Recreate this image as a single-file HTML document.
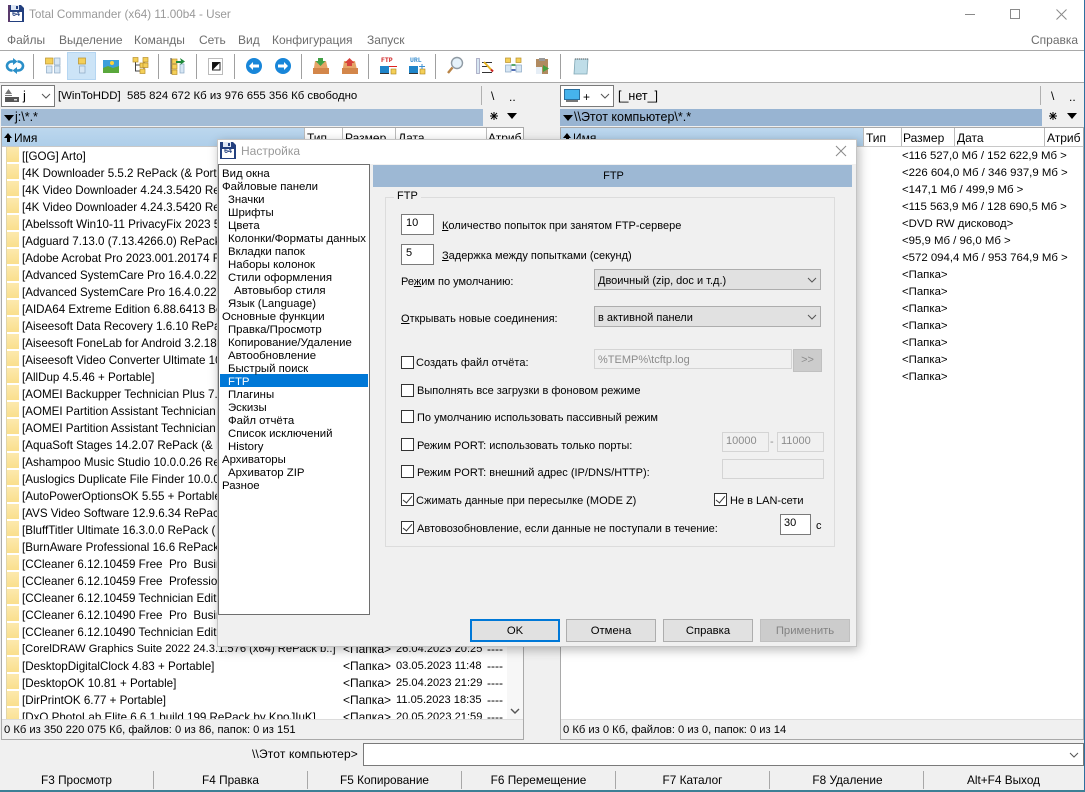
<!DOCTYPE html>
<html lang="ru"><head><meta charset="utf-8"><title>Total Commander</title>
<style>
html,body{margin:0;padding:0}
body{width:1085px;height:792px;position:relative;overflow:hidden;background:#f0f0f0;font:12px/16px "Liberation Sans",sans-serif;color:#000}
.a{position:absolute;white-space:nowrap}
.b{position:absolute;box-sizing:border-box}
.g{color:#6d6d6d}
svg{position:absolute;overflow:visible}
.sep{position:absolute;top:54px;width:1px;height:25px;background:#a0a0a0}
.hd{position:absolute;top:128px;height:18px;background:linear-gradient(#bcd7ee,#aecee9)}
.hc{position:absolute;top:130px;line-height:16px;white-space:nowrap}
.dv{position:absolute;top:128px;width:1px;height:18px;background:#bbb}
.list{position:absolute;top:148px;left:22px;line-height:17px;white-space:nowrap}
.list div{height:17px}
.fold{position:absolute;left:6px;top:147px;width:13px;height:572px;background:repeating-linear-gradient(#fce9ad 0,#fadf8d 15px,#fff 15px,#fff 17px);border-left:1px solid #e2d6a8;box-sizing:border-box}
.tree{position:absolute;top:168px;left:0;font-size:11.4px;line-height:13px;white-space:nowrap}
.tree div{height:13px}
.l0{padding-left:222px}.l1{padding-left:228px}.l2{padding-left:234px}
.edit{position:absolute;box-sizing:border-box;background:#fff;border:1px solid #7a7a7a;padding:0 0 0 4px;line-height:16px}
.dis{position:absolute;box-sizing:border-box;background:#f0f0f0;border:1px solid #d4d4d4;color:#8c8c8c;padding:2px 0 0 3px;line-height:16px}
.sel{position:absolute;box-sizing:border-box;background:#e1e1e1;border:1px solid #adadad;left:594px;width:227px;height:21px;padding:3px 0 0 3px;line-height:16px}
.ck{position:absolute;box-sizing:border-box;width:13px;height:13px;left:401px;background:#fff;border:1px solid #333}
.ck.on::after{content:"";position:absolute;left:3px;top:0;width:4px;height:8px;border:solid #333;border-width:0 1px 1px 0;transform:rotate(40deg)}
.btn{position:absolute;box-sizing:border-box;top:619px;width:90px;height:23px;background:#e1e1e1;border:1px solid #adadad;text-align:center;line-height:23px;font-size:11.3px}
.fk{position:absolute;top:772px;text-align:center;line-height:16px;width:153px;font-size:11.8px}
.fs{position:absolute;top:771px;width:1px;height:18px;background:#a8a8a8}
.dlg{font-size:11px}
u{text-decoration:underline}
</style></head><body>

<!-- window chrome -->
<div class="b" style="left:0;top:0;width:1085px;height:51px;background:#fff"></div>
<svg style="left:8px;top:5px" width="16" height="17" viewBox="0 0 16 17"><path d="M0 0h13l3 3v14H0z" fill="#23407f"/><rect x="3" y="0" width="8" height="5" fill="#dfe8f5"/><rect x="8" y="1" width="2" height="3" fill="#23407f"/><rect x="2" y="7" width="12" height="9" fill="#fff"/><path d="M0 0h2v17H0z" fill="#c0304a" opacity=".35"/></svg>
<div class="a" style="left:9px;top:9px;font:bold 7px/12px 'Liberation Sans',sans-serif;color:#23407f;width:14px;text-align:center">64</div>
<div class="a" style="left:29px;top:7px;color:#999;font-size:11.7px">Total Commander (x64) 11.00b4 - User</div>
<svg style="left:960px;top:8px" width="110" height="14"><path d="M5 6.500h10" stroke="#8a8a8a"/><rect x="50.500" y="1.500" width="9" height="9" fill="none" stroke="#8a8a8a"/><path d="M96.500 1.500l10 10M106.500 1.500l-10 10" stroke="#8a8a8a" fill="none"/></svg>
<div class="a g" style="left:7px;top:32px">Файлы</div>
<div class="a g" style="left:59px;top:32px">Выделение</div>
<div class="a g" style="left:134px;top:32px">Команды</div>
<div class="a g" style="left:199px;top:32px">Сеть</div>
<div class="a g" style="left:238px;top:32px">Вид</div>
<div class="a g" style="left:272px;top:32px">Конфигурация</div>
<div class="a g" style="left:367px;top:32px">Запуск</div>
<div class="a g" style="left:1031px;top:32px">Справка</div>
<div class="b" style="left:0;top:50px;width:1084px;height:1px;background:#a9a9a9"></div>

<!-- toolbar -->
<div class="b" style="left:0;top:51px;width:1084px;height:31px;background:#fff"></div>
<div class="b" style="left:0;top:82px;width:1084px;height:1px;background:#a9a9a9"></div>
<div class="b" style="left:67px;top:52px;width:29px;height:28px;background:#cce4f7;border:1px solid #b5d6f2"></div>
<div class="sep" style="left:33px"></div><div class="sep" style="left:158px"></div><div class="sep" style="left:196px"></div><div class="sep" style="left:234px"></div><div class="sep" style="left:301px"></div><div class="sep" style="left:368px"></div><div class="sep" style="left:435px"></div><div class="sep" style="left:560px"></div>

<svg style="left:0;top:0" width="620" height="84" viewBox="0 0 620 84">
<defs>
<g id="fd"><rect width="7" height="6" fill="#f4cf58" stroke="#b8902a" stroke-width=".7"/></g>
<g id="fs"><rect width="5" height="4.500" fill="#f4cf58" stroke="#b8902a" stroke-width=".7"/></g>
<g id="pg"><rect width="5.500" height="7" fill="#d6e6f4" stroke="#8aa8c4" stroke-width=".7"/></g>
</defs>
<!-- refresh -->
<path d="M13 61.500h-1a5 4.500 0 0 0 0 9h.5M17 70.500h1a5 4.500 0 0 0 0-9h-.5" fill="none" stroke="#2a8fc8" stroke-width="2.600"/><path d="M13 58l4.500 3.500-4.500 3.500zM17 67l-4.500 3.500 4.500 3.500z" fill="#2a8fc8"/>
<!-- two panels -->
<rect x="45.500" y="58" width="7.500" height="6" fill="#f4cf58" stroke="#b8902a" stroke-width=".7"/><rect x="54.500" y="58" width="5.500" height="7" fill="#d6e6f4" stroke="#8aa8c4" stroke-width=".7"/><use href="#pg" x="46.500" y="66"/><use href="#pg" x="54.500" y="66"/>
<!-- one panel -->
<rect x="78.500" y="58" width="7" height="6" fill="#f4cf58" stroke="#b8902a" stroke-width=".7"/><use href="#pg" x="79.500" y="66"/>
<!-- picture -->
<rect x="103" y="60" width="16" height="13" fill="#3b9fdc"/><path d="M103 73v-5l5-2 5 2 6-2v7z" fill="#5aa83c"/><circle cx="112" cy="63" r="2" fill="#ffd23c"/>
<!-- tree -->
<path d="M135.500 60v11h5M135.500 65h5M144 60v10" stroke="#444" fill="none"/><use href="#fs" x="133" y="57.500"/><use href="#fs" x="140" y="63"/><use href="#fs" x="140" y="69"/><use href="#fs" x="143" y="57.500"/><use href="#fs" x="143" y="63"/>
<!-- sync dirs -->
<path d="M171 58v16" stroke="#444"/><use href="#fs" x="172" y="59"/><use href="#fs" x="172" y="64.500"/><use href="#fs" x="172" y="70"/><rect x="180" y="64" width="4" height="9" fill="#d6e6f4" stroke="#8aa8c4" stroke-width=".7"/><path d="M176 61h5l-1-3 5 3.500-5 3.500 1-2h-5z" fill="#1f8a3c"/>
<!-- invert -->
<rect x="208.500" y="58.500" width="14" height="16" fill="#fff" stroke="#777" stroke-dasharray="1 1"/><rect x="212.500" y="62.500" width="7.500" height="7.500" fill="#fff" stroke="#222"/><path d="M212.500 62.500h7.500l-7.500 7.500z" fill="#111"/>
<!-- back / forward -->
<circle cx="254" cy="66" r="8" fill="#1886d9"/><path d="M249 66l4-4v2.500h6v3h-6V70z" fill="#fff"/>
<circle cx="283" cy="66" r="8" fill="#1886d9"/><path d="M288 66l-4-4v2.500h-6v3h6V70z" fill="#fff"/>
<!-- boxes -->
<path d="M315 61h3v3h5v-3h3l3 13h-16z" fill="#e6a567"/><path d="M313 68h16v6h-16z" fill="#d3864a"/><path d="M318 58h5v3h2.500l-5 5-5-5h2.500z" fill="#42a145"/>
<path d="M344 61h3v3h5v-3h3l3 13h-16z" fill="#e6a567"/><path d="M342 68h16v6h-16z" fill="#d3864a"/><path d="M347 66v-3h-2.500l5-5 5 5H352v3z" fill="#d8423c"/>
<!-- FTP/URL -->
<rect x="380" y="66" width="9" height="7" fill="#1e84c9"/><rect x="380" y="73" width="9" height="1" fill="#333"/><rect x="391" y="69" width="5" height="5" fill="#f4cf58" stroke="#a8841f" stroke-width=".6"/><path d="M389 66.500h8" stroke="#d22" stroke-width="1"/>
<rect x="409" y="66" width="9" height="7" fill="#1e84c9"/><rect x="409" y="73" width="9" height="1" fill="#333"/><rect x="420" y="69" width="5" height="5" fill="#f4cf58" stroke="#a8841f" stroke-width=".6"/><path d="M419 66.500h6M422 64v5" stroke="#3d8fd0"/>
<!-- search -->
<circle cx="457" cy="63" r="5.500" fill="#e6f2fa" stroke="#8f9aa3" stroke-width="1.400"/><path d="M452.500 67.500l-4.500 5.500" stroke="#b98446" stroke-width="2.400"/>
<!-- multi rename -->
<rect x="476.500" y="58.500" width="3" height="15" fill="#d7e6f2" stroke="#88a" stroke-width=".6"/><path d="M482 62.500h10M482 66.500h7M482 72.500h10" stroke="#333"/><path d="M484 62l7 7.500" stroke="#e6b422" stroke-width="2"/><path d="M491 69.500l2 2" stroke="#c22" stroke-width="2"/>
<!-- compare -->
<use href="#fs" x="505.500" y="58"/><use href="#fs" x="516" y="58"/><use href="#pg" x="505.500" y="65"/><use href="#pg" x="516" y="65"/><path d="M511.500 65h4" stroke="#1f8a3c" stroke-width="1.500"/><path d="M511.500 70h4" stroke="#1b3f9e" stroke-width="1.500"/>
<!-- clipboard -->
<rect x="536" y="59" width="12" height="15" fill="#b08a60"/><rect x="539" y="58" width="6" height="3" fill="#999"/><rect x="536" y="67" width="6" height="7" fill="#e6eef6"/><path d="M543 65l6 3.500-6 3.500z" fill="#45a03f"/>
<!-- notebook -->
<path d="M575 59h13l-1 15h-13z" fill="#bfdde8" stroke="#7fa5b3" stroke-width=".8"/><path d="M575 59h13" stroke="#555" stroke-dasharray="1 1"/>
</svg>
<div class="a" style="left:381px;top:57px;font:bold 6.500px/8px 'Liberation Mono',monospace;color:#d02020">FTP</div>
<div class="a" style="left:410px;top:57px;font:bold 6.500px/8px 'Liberation Mono',monospace;color:#3a8fd0">URL</div>

<!-- panels -->
<div class="b" style="left:1px;top:127px;width:523px;height:613px;background:#fff;border:1px solid #a9a9a9"></div>
<div class="b" style="left:560px;top:127px;width:524px;height:613px;background:#fff;border:1px solid #a9a9a9"></div>
<div class="b" style="left:507px;top:147px;width:16px;height:572px;background:#f7f7f7"></div>
<svg style="left:510px;top:708px" width="10" height="6"><path d="M1 1l4 4 4-4" fill="none" stroke="#555" stroke-width="1.400"/></svg>

<!-- left drive -->
<div class="b" style="left:1px;top:85px;width:54px;height:22px;background:#fff;border:1px solid #7a7a7a"></div>
<svg style="left:5px;top:88px" width="14" height="15"><path d="M0 6l3.500-5L7 6z" fill="#777"/><rect x="0" y="7" width="7" height="1" fill="#777"/><rect x="0" y="9" width="14" height="5" fill="#555"/><rect x="9" y="11" width="3" height="1.500" fill="#ddd"/></svg>
<div class="a" style="left:23px;top:88px;font-size:13px">j</div>
<svg style="left:41px;top:93px" width="10" height="6"><path d="M1 1l4 4 4-4" fill="none" stroke="#555"/></svg>
<div class="a" style="left:58px;top:88px;font-size:11.4px">[WinToHDD]&nbsp; 585 824 672 Кб из 976 655 356 Кб свободно</div>
<div class="b" style="left:481px;top:86px;width:1px;height:19px;background:#b0b0b0"></div>
<div class="a" style="left:491px;top:88px">\</div><div class="a" style="left:509px;top:89px">..</div>
<div class="b" style="left:1px;top:109px;width:482px;height:17px;background:#a3bcd6"></div>
<svg style="left:4px;top:115px" width="11" height="6"><path d="M0 0h10l-5 6z" fill="#000"/></svg>
<div class="a" style="left:15px;top:109px;font-size:12.5px">j:\*.*</div>
<svg style="left:490px;top:112px" width="8" height="8"><path d="M4 0v8M0 4h8M1 1l6 6M7 1l-6 6" stroke="#000"/></svg>
<svg style="left:507px;top:113px" width="11" height="6"><path d="M0 0h10l-5 6z" fill="#000"/></svg>

<!-- right drive -->
<div class="b" style="left:560px;top:85px;width:54px;height:22px;background:#fff;border:1px solid #7a7a7a"></div>
<svg style="left:564px;top:89px" width="16" height="14"><rect x=".5" y=".5" width="15" height="10" fill="#46b3ec" stroke="#2a6f9e"/><rect x="2" y="11" width="12" height="2" fill="#777"/></svg>
<div class="a" style="left:583px;top:89px">+</div>
<svg style="left:600px;top:93px" width="10" height="6"><path d="M1 1l4 4 4-4" fill="none" stroke="#555"/></svg>
<div class="a" style="left:618px;top:88px;font-size:12.500px">[_нет_]</div>
<div class="b" style="left:1040px;top:86px;width:1px;height:19px;background:#b0b0b0"></div>
<div class="a" style="left:1051px;top:88px">\</div><div class="a" style="left:1069px;top:89px">..</div>
<div class="b" style="left:560px;top:109px;width:482px;height:17px;background:#98b4d2"></div>
<svg style="left:563px;top:115px" width="11" height="6"><path d="M0 0h10l-5 6z" fill="#000"/></svg>
<div class="a" style="left:574px;top:109px;font-size:12.5px">\\Этот компьютер\*.*</div>
<svg style="left:1049px;top:112px" width="8" height="8"><path d="M4 0v8M0 4h8M1 1l6 6M7 1l-6 6" stroke="#000"/></svg>
<svg style="left:1067px;top:113px" width="11" height="6"><path d="M0 0h10l-5 6z" fill="#000"/></svg>

<!-- headers -->
<div class="hd" style="left:2px;width:302px"></div>
<svg style="left:4px;top:133px" width="9" height="9"><path d="M4 0l4 5H6v4H3V5H0z" fill="#000"/></svg>
<div class="hc" style="left:14px">Имя</div><div class="hc" style="left:307px">Тип</div><div class="hc" style="left:345px">Размер</div><div class="hc" style="left:398px">Дата</div><div class="hc" style="left:488px">Атриб</div>
<div class="dv" style="left:304px"></div><div class="dv" style="left:342px"></div><div class="dv" style="left:395px"></div><div class="dv" style="left:486px"></div>
<div class="hd" style="left:561px;width:302px"></div>
<svg style="left:563px;top:133px" width="9" height="9"><path d="M4 0l4 5H6v4H3V5H0z" fill="#000"/></svg>
<div class="hc" style="left:573px">Имя</div><div class="hc" style="left:866px">Тип</div><div class="hc" style="left:903px">Размер</div><div class="hc" style="left:957px">Дата</div><div class="hc" style="left:1047px">Атриб</div>
<div class="dv" style="left:863px"></div><div class="dv" style="left:901px"></div><div class="dv" style="left:954px"></div><div class="dv" style="left:1044px"></div>
<div class="b" style="left:2px;top:146px;width:521px;height:1px;background:#c8c8c8"></div>
<div class="b" style="left:561px;top:146px;width:522px;height:1px;background:#c8c8c8"></div>

<!-- left list -->
<div class="fold"></div>
<div class="list" style="width:485px;height:571px;overflow:hidden;font-size:11.6px">
<div>[[GOG] Arto]</div>
<div>[4K Downloader 5.5.2 RePack (&amp; Portable)</div>
<div>[4K Video Downloader 4.24.3.5420 RePack</div>
<div>[4K Video Downloader 4.24.3.5420 RePack</div>
<div>[Abelssoft Win10-11 PrivacyFix 2023 5.0</div>
<div>[Adguard 7.13.0 (7.13.4266.0) RePack</div>
<div>[Adobe Acrobat Pro 2023.001.20174 RePack</div>
<div>[Advanced SystemCare Pro 16.4.0.225</div>
<div>[Advanced SystemCare Pro 16.4.0.225</div>
<div>[AIDA64 Extreme Edition 6.88.6413 Beta</div>
<div>[Aiseesoft Data Recovery 1.6.10 RePack</div>
<div>[Aiseesoft FoneLab for Android 3.2.18</div>
<div>[Aiseesoft Video Converter Ultimate 10</div>
<div>[AllDup 4.5.46 + Portable]</div>
<div>[AOMEI Backupper Technician Plus 7.3</div>
<div>[AOMEI Partition Assistant Technician</div>
<div>[AOMEI Partition Assistant Technician</div>
<div>[AquaSoft Stages 14.2.07 RePack (&amp; Port</div>
<div>[Ashampoo Music Studio 10.0.0.26 RePack</div>
<div>[Auslogics Duplicate File Finder 10.0.0</div>
<div>[AutoPowerOptionsOK 5.55 + Portable]</div>
<div>[AVS Video Software 12.9.6.34 RePack</div>
<div>[BluffTitler Ultimate 16.3.0.0 RePack (</div>
<div>[BurnAware Professional 16.6 RePack</div>
<div>[CCleaner 6.12.10459 Free&nbsp; Pro&nbsp; Business</div>
<div>[CCleaner 6.12.10459 Free&nbsp; Professional</div>
<div>[CCleaner 6.12.10459 Technician Edition</div>
<div>[CCleaner 6.12.10490 Free&nbsp; Pro&nbsp; Business</div>
<div>[CCleaner 6.12.10490 Technician Edition</div>
<div style="font-size:11.2px">[CorelDRAW Graphics Suite 2022 24.3.1.576 (x64) RePack b..]</div>
<div>[DesktopDigitalClock 4.83 + Portable]</div>
<div>[DesktopOK 10.81 + Portable]</div>
<div>[DirPrintOK 6.77 + Portable]</div>
<div>[DxO PhotoLab Elite 6.6.1 build 199 RePack by KpoJIuK]</div>
</div>
<div class="list" style="left:343px;top:641px;height:78px;overflow:hidden;width:50px">
<div>&lt;Папка&gt;</div><div>&lt;Папка&gt;</div><div>&lt;Папка&gt;</div><div>&lt;Папка&gt;</div><div>&lt;Папка&gt;</div>
</div>
<div class="list" style="left:396px;top:641px;height:78px;overflow:hidden;width:88px;font-size:11.1px">
<div>26.04.2023 20:25</div><div>03.05.2023 11:48</div><div>25.04.2023 21:29</div><div>11.05.2023 18:35</div><div>20.05.2023 21:59</div>
</div>
<div class="list" style="left:487px;top:641px;height:78px;overflow:hidden;width:20px">
<div>----</div><div>----</div><div>----</div><div>----</div><div>----</div>
</div>

<!-- right list -->
<div class="list" style="left:902px;font-size:11.4px">
<div>&lt;116 527,0 Мб / 152 622,9 Мб &gt;</div>
<div>&lt;226 604,0 Мб / 346 937,9 Мб &gt;</div>
<div>&lt;147,1 Мб / 499,9 Мб &gt;</div>
<div>&lt;115 563,9 Мб / 128 690,5 Мб &gt;</div>
<div>&lt;DVD RW дисковод&gt;</div>
<div>&lt;95,9 Мб / 96,0 Мб &gt;</div>
<div>&lt;572 094,4 Мб / 953 764,9 Мб &gt;</div>
<div>&lt;Папка&gt;</div><div>&lt;Папка&gt;</div><div>&lt;Папка&gt;</div><div>&lt;Папка&gt;</div><div>&lt;Папка&gt;</div><div>&lt;Папка&gt;</div><div>&lt;Папка&gt;</div>
</div>

<!-- status bars -->
<div class="b" style="left:2px;top:719px;width:521px;height:20px;background:#f0f0f0;border-top:1px solid #dcdcdc"></div>
<div class="a" style="left:4px;top:722px;font-size:11.2px">0 Кб из 350 220 075 Кб, файлов: 0 из 86, папок: 0 из 151</div>
<div class="b" style="left:561px;top:719px;width:522px;height:20px;background:#f0f0f0;border-top:1px solid #dcdcdc"></div>
<div class="a" style="left:563px;top:722px;font-size:11.2px">0 Кб из 0 Кб, файлов: 0 из 0, папок: 0 из 14</div>

<!-- command line -->
<div class="a" style="left:252px;top:746px;letter-spacing:.15px">\\Этот компьютер&gt;</div>
<div class="b" style="left:363px;top:743px;width:721px;height:23px;background:#fff;border:1px solid #7a7a7a"></div>
<svg style="left:1069px;top:752px" width="10" height="6"><path d="M1 1l4 4 4-4" fill="none" stroke="#555"/></svg>

<!-- function keys -->
<div class="fk" style="left:0">F3 Просмотр</div>
<div class="fs" style="left:153px"></div>
<div class="fk" style="left:154px">F4 Правка</div>
<div class="fs" style="left:307px"></div>
<div class="fk" style="left:308px">F5 Копирование</div>
<div class="fs" style="left:461px"></div>
<div class="fk" style="left:462px">F6 Перемещение</div>
<div class="fs" style="left:615px"></div>
<div class="fk" style="left:616px">F7 Каталог</div>
<div class="fs" style="left:769px"></div>
<div class="fk" style="left:771px">F8 Удаление</div>
<div class="fs" style="left:923px"></div>
<div class="fk" style="left:927px">Alt+F4 Выход</div>

<!-- window border -->
<div class="b" style="left:1084px;top:0;width:1px;height:792px;background:#2f6f9f"></div>
<div class="b" style="left:0;top:790px;width:1085px;height:2px;background:#3c7f95"></div>

<!-- dialog -->
<div class="b" style="left:217px;top:139px;width:640px;height:508px;background:#f0f0f0;border:1px solid #c4c4c4;box-shadow:2px 3px 10px rgba(0,0,0,.28)"></div>
<div class="b" style="left:218px;top:140px;width:638px;height:24px;background:#fff"></div>
<svg style="left:220px;top:142px" width="16" height="17" viewBox="0 0 16 17"><path d="M0 0h13l3 3v14H0z" fill="#23407f"/><rect x="3" y="0" width="8" height="5" fill="#dfe8f5"/><rect x="8" y="1" width="2" height="3" fill="#23407f"/><rect x="2" y="7" width="12" height="9" fill="#fff"/></svg>
<div class="a" style="left:221px;top:146px;font:bold 7px/12px 'Liberation Sans',sans-serif;color:#23407f;width:14px;text-align:center">64</div>
<div class="a" style="left:241px;top:143px;color:#999">Настройка</div>
<svg style="left:835px;top:145px" width="13" height="13"><path d="M1 1l10 10M11 1L1 11" stroke="#8a8a8a" fill="none"/></svg>

<!-- tree -->
<div class="b" style="left:218px;top:164px;width:152px;height:451px;background:#fff;border:1px solid #6e6e6e"></div>
<div class="b" style="left:220px;top:374px;width:148px;height:13px;background:#0078d7"></div>
<div class="tree">
<div class="l0">Вид окна</div>
<div class="l0">Файловые панели</div>
<div class="l1">Значки</div>
<div class="l1">Шрифты</div>
<div class="l1">Цвета</div>
<div class="l1">Колонки/Форматы данных</div>
<div class="l1">Вкладки папок</div>
<div class="l1">Наборы колонок</div>
<div class="l1">Стили оформления</div>
<div class="l2">Автовыбор стиля</div>
<div class="l1">Язык (Language)</div>
<div class="l0">Основные функции</div>
<div class="l1">Правка/Просмотр</div>
<div class="l1">Копирование/Удаление</div>
<div class="l1">Автообновление</div>
<div class="l1">Быстрый поиск</div>
<div class="l1" style="color:#fff">FTP</div>
<div class="l1">Плагины</div>
<div class="l1">Эскизы</div>
<div class="l1">Файл отчёта</div>
<div class="l1">Список исключений</div>
<div class="l1">History</div>
<div class="l0">Архиваторы</div>
<div class="l1">Архиватор ZIP</div>
<div class="l0">Разное</div>
</div>

<div class="dlg">
<!-- FTP header -->
<div class="b" style="left:373px;top:165px;width:479px;height:22px;background:#9db8d4;text-align:center;line-height:22px;padding-left:2px">FTP</div>

<!-- group -->
<div class="b" style="left:385px;top:197px;width:450px;height:350px;border:1px solid #dcdcdc"></div>
<div class="a" style="left:394px;top:188px;background:#f0f0f0;padding:0 3px">FTP</div>

<div class="edit" style="left:401px;top:214px;width:33px;height:21px">10</div>
<div class="a" style="left:442px;top:218px"><u>К</u>оличество попыток при занятом FTP-сервере</div>
<div class="edit" style="left:401px;top:244px;width:33px;height:21px">5</div>
<div class="a" style="left:442px;top:248px"><u>З</u>адержка между попытками (секунд)</div>
<div class="a" style="left:401px;top:274px">Ре<u>ж</u>им по умолчанию:</div>
<div class="sel" style="top:269px">Двоичный (zip, doc и т.д.)</div>
<svg style="left:807px;top:277px" width="10" height="6"><path d="M1 1l4 4 4-4" fill="none" stroke="#555"/></svg>
<div class="a" style="left:401px;top:311px"><u>О</u>ткрывать новые соединения:</div>
<div class="sel" style="top:306px">в активной панели</div>
<svg style="left:807px;top:314px" width="10" height="6"><path d="M1 1l4 4 4-4" fill="none" stroke="#555"/></svg>

<div class="ck" style="top:356px"></div>
<div class="a" style="left:416px;top:355px">Создать файл отчёта:</div>
<div class="dis" style="left:594px;top:349px;width:198px;height:20px">%TEMP%\tcftp.log</div>
<div class="b" style="left:793px;top:349px;width:29px;height:23px;background:#ccc;border:1px solid #c0c0c0;color:#8c8c8c;text-align:center;line-height:21px">&gt;&gt;</div>

<div class="ck" style="top:384px"></div>
<div class="a" style="left:417px;top:383px">Выполнять все загрузки в фоновом режиме</div>
<div class="ck" style="top:410px"></div>
<div class="a" style="left:417px;top:410px">По умолчанию использовать пассивный режим</div>
<div class="ck" style="top:438px"></div>
<div class="a" style="left:417px;top:438px">Режим PORT: использовать только порты:</div>
<div class="dis" style="left:722px;top:432px;width:47px;height:20px;padding-top:0">10000</div>
<div class="a" style="left:770px;top:434px;color:#8c8c8c">-</div>
<div class="dis" style="left:777px;top:432px;width:47px;height:20px;padding-top:0">11000</div>
<div class="ck" style="top:465px"></div>
<div class="a" style="left:417px;top:465px">Режим PORT: внешний адрес (IP/DNS/HTTP):</div>
<div class="dis" style="left:722px;top:459px;width:102px;height:20px"></div>
<div class="ck on" style="top:493px"></div>
<div class="a" style="left:416px;top:493px">Сжимать данные при пересылке (MODE Z)</div>
<div class="ck on" style="left:714px;top:493px"></div>
<div class="a" style="left:730px;top:493px">Не в LAN-сети</div>
<div class="ck on" style="top:521px"></div>
<div class="a" style="left:417px;top:521px">Автовозобновление, если данные не поступали в течение:</div>
<div class="edit" style="left:780px;top:514px;width:31px;height:21px;padding-left:3px">30</div>
<div class="a" style="left:816px;top:518px">с</div>
</div>

<div class="btn" style="left:470px;border:2px solid #0078d7;line-height:20px">OK</div>
<div class="btn" style="left:566px;line-height:22px">Отмена</div>
<div class="btn" style="left:663px;line-height:22px">Справка</div>
<div class="btn" style="left:760px;background:#ccc;border-color:#c0c0c0;color:#838383;line-height:22px">Применить</div>

</body></html>
